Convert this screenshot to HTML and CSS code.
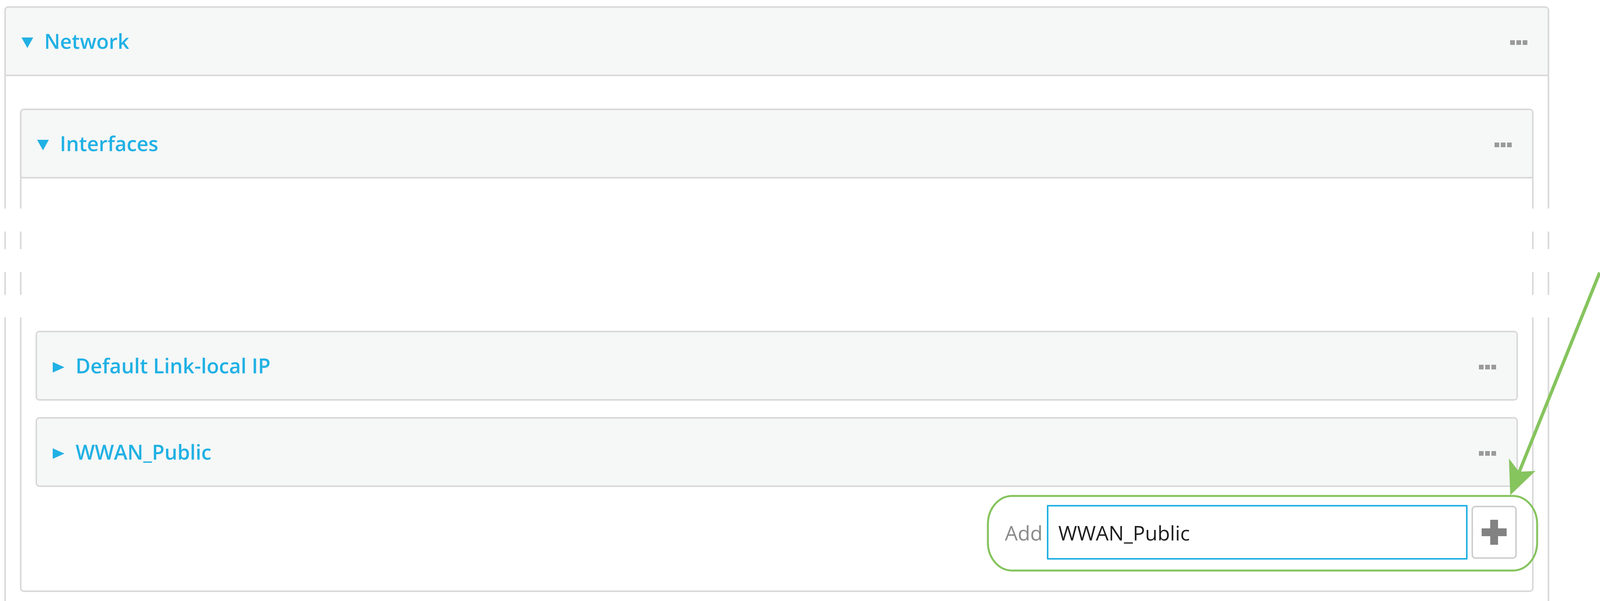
FILE: index.html
```html
<!DOCTYPE html>
<html lang="en">
<head>
<meta charset="utf-8">
<title>Network - Interfaces</title>
<link rel="stylesheet" href="styles.css">
</head>
<body>
<div class="page">
  <section class="panel panel-outer">
    <div class="panel-head head-open">
      <span class="caret"><svg viewBox="0 0 30 27" width="30" height="27"><polygon points="0,0 30,0 15,27" /></svg></span>
      <span class="title">Network</span>
      <span class="dots"><i></i><i></i><i></i></span>
    </div>
    <div class="panel-body outer-body">
      <section class="panel panel-inner">
        <div class="panel-head head-open">
          <span class="caret"><svg viewBox="0 0 30 27" width="30" height="27"><polygon points="0,0 30,0 15,27" /></svg></span>
          <span class="title">Interfaces</span>
          <span class="dots"><i></i><i></i><i></i></span>
        </div>
        <div class="panel-body inner-body">
          <section class="panel panel-sub">
            <div class="panel-head">
              <span class="caret"><svg viewBox="0 0 30 27" width="30" height="27"><polygon points="0,0 30,13.5 0,27" /></svg></span>
              <span class="title">Default Link-local IP</span>
              <span class="dots"><i></i><i></i><i></i></span>
            </div>
          </section>
          <section class="panel panel-sub">
            <div class="panel-head">
              <span class="caret"><svg viewBox="0 0 30 27" width="30" height="27"><polygon points="0,0 30,13.5 0,27" /></svg></span>
              <span class="title">WWAN_Public</span>
              <span class="dots"><i></i><i></i><i></i></span>
            </div>
          </section>
          <div class="add-row">
            <label class="add-label" for="add-name">Add</label>
            <input class="add-input" id="add-name" type="text" value="WWAN_Public">
            <button class="add-button" type="button" aria-label="Add">
              <svg viewBox="0 0 64 64" width="64" height="64"><rect x="22" y="0" width="20" height="64"/><rect x="0" y="22" width="64" height="20"/></svg>
            </button>
          </div>
        </div>
      </section>
    </div>
  </section>

  <div class="tear tear-1"></div>
  <div class="tear tear-2"></div>
  <div class="tear tear-3"></div>

  <svg class="annotation" viewBox="0 0 4760 1539" preserveAspectRatio="none">
    <rect x="2939" y="1270" width="1634" height="191" rx="72" ry="72" fill="none" stroke="#86c45e" stroke-width="5" vector-effect="non-scaling-stroke"/>
    <line x1="4759" y1="698" x2="4519" y2="1210" stroke="#86c45e" stroke-width="8.5" vector-effect="non-scaling-stroke"/>
    <polygon points="4493,1268 4489,1174 4519,1208 4568,1206" fill="#86c45e"/>
  </svg>
</div>
</body>
</html>
```

FILE: styles.css
```css
:root {
  /* one pixel of the 4760px-wide design, resolved against the real viewport */
  --u: calc(100vw / 4760);
}

html, body {
  margin: 0;
  padding: 0;
  background: #ffffff;
  height: 1539px;
  overflow: hidden;
}

body {
  font-family: "Open Sans", "Liberation Sans", Arial, sans-serif;
}

.page {
  position: relative;
  width: 100%;
  height: 1539px;
  padding: 16px 0 0 calc(13 * var(--u));
  box-sizing: border-box;
  overflow: hidden;
}

.panel {
  border: 4px solid #d9d9d9;
  border-radius: 10px;
  background: #ffffff;
}

.panel-outer {
  width: calc(4596 * var(--u));
  box-sizing: border-box;
  border-bottom: none;
}

.panel-head {
  height: 171px;
  background: #f6f7f7;
  display: flex;
  align-items: center;
  padding: 0 calc(60 * var(--u)) 0 calc(46 * var(--u));
  border-radius: 6px;
}

.head-open {
  border-bottom: 4px solid #d9d9d9;
  border-radius: 6px 6px 0 0;
}

.caret {
  width: 30px;
  height: 27px;
  margin-right: calc(33 * var(--u));
  display: flex;
  flex: none;
  transform: translateY(4px);
}

.caret svg {
  display: block;
  fill: #20b1e4;
}

.title {
  flex: 1;
  font-size: 52px;
  font-weight: 600;
  color: #20b1e4;
  line-height: 1.36;
  white-space: nowrap;
}

.dots {
  display: flex;
  gap: 4px;
  transform: translateY(3px);
}

.dots i {
  display: block;
  width: 12px;
  height: 12px;
  background: #9a9a9a;
}

.outer-body {
  padding: 83px calc(42 * var(--u)) 80px;
}

.inner-body {
  padding: 390px calc(42 * var(--u)) 79px;
}

.panel-sub + .panel-sub {
  margin-top: 42px;
}

.add-row {
  margin-top: 46px;
  height: 140px;
  display: flex;
  justify-content: flex-end;
  align-items: center;
  padding-right: calc(3 * var(--u));
}

.add-label {
  font-size: 52px;
  color: #8a8a8a;
  margin-right: calc(13 * var(--u));
}

.add-input {
  width: calc(1251 * var(--u));
  height: 140px;
  box-sizing: border-box;
  border: 4px solid #22b0e4;
  border-radius: 2px;
  padding: 0 calc(29 * var(--u));
  margin: 0;
  font-family: "Open Sans", "Liberation Sans", Arial, sans-serif;
  font-size: 52px;
  color: #1e1e1e;
  background: #ffffff;
  outline: none;
}

.add-button {
  margin: 0 0 0 calc(12 * var(--u));
  width: calc(135 * var(--u));
  height: 136px;
  box-sizing: border-box;
  border: 4px solid #cfcfcf;
  border-radius: 10px;
  background: #ffffff;
  padding: 0;
  display: flex;
  align-items: center;
  justify-content: center;
}

.add-button svg {
  display: block;
  fill: #828282;
}

.tear {
  position: absolute;
  left: 0;
  right: 0;
  background: #ffffff;
}

.tear-1 { top: 534px; height: 59px; }
.tear-2 { top: 638px; height: 59px; }
.tear-3 { top: 755px; height: 58px; }

.annotation {
  position: absolute;
  left: 0;
  top: 0;
  width: 100%;
  height: 1539px;
  pointer-events: none;
}
```
